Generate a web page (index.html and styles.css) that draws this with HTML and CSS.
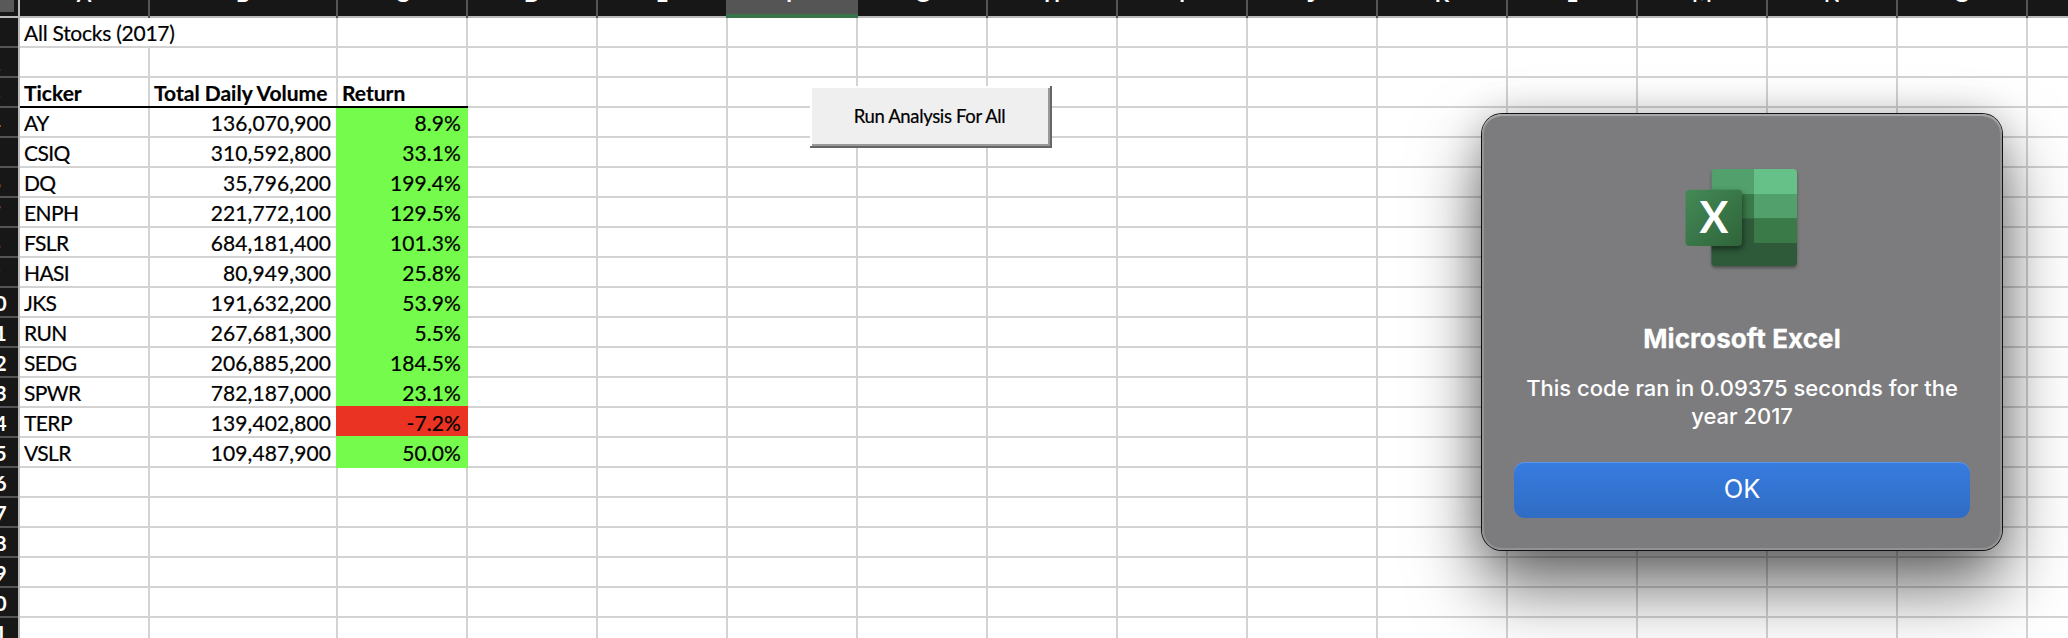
FILE: index.html
```html
<!DOCTYPE html>
<html lang="en">
<head>
<meta charset="utf-8">
<title>All Stocks (2017)</title>
<link rel="stylesheet" href="styles.css">
</head>
<body>
<main class="sheet" id="sheet"></main>

<button class="run-button">Run Analysis For All</button>

<section class="dialog" role="dialog" aria-label="Microsoft Excel">
  <svg class="app-icon" width="124" height="112" viewBox="0 0 124 112" aria-hidden="true">
    <defs>
      <linearGradient id="tile" x1="0" y1="0" x2="1" y2="1">
        <stop offset="0" stop-color="#448a57"/>
        <stop offset="1" stop-color="#2e6439"/>
      </linearGradient>
      <clipPath id="book"><rect x="31.5" y="7" width="85.5" height="97" rx="4"/></clipPath>
      <filter id="soft" x="-20%" y="-20%" width="140%" height="140%"><feGaussianBlur stdDeviation="1.5"/></filter>
      <filter id="softer" x="-20%" y="-20%" width="150%" height="150%"><feGaussianBlur stdDeviation="3"/></filter>
    </defs>
    <rect x="31.5" y="9" width="85.5" height="97" rx="4" fill="#000" opacity=".35" filter="url(#soft)"/>
    <g clip-path="url(#book)">
      <rect x="31" y="7" width="43" height="25" fill="#52a06c"/>
      <rect x="74" y="7" width="43" height="25" fill="#66c189"/>
      <rect x="31" y="32" width="43" height="25" fill="#3a7a48"/>
      <rect x="74" y="32" width="43" height="25" fill="#52a06c"/>
      <rect x="31" y="56.500" width="86" height="48" fill="#2e5a3a"/>
      <rect x="74" y="56.500" width="43" height="24.500" fill="#3a7a48"/>
      <rect x="9" y="31" width="54" height="56" rx="4" fill="#000" opacity=".5" filter="url(#softer)"/>
    </g>
    <rect x="5.500" y="27.700" width="56.500" height="56.300" rx="4" fill="url(#tile)"/>
    <text class="icon-letter" x="33.800" y="71" text-anchor="middle">X</text>
  </svg>
  <h1 class="dialog-title">Microsoft Excel</h1>
  <p class="dialog-text">This code ran in 0.09375 seconds for the<br>year 2017</p>
  <button class="ok-button">OK</button>
</section>
<script src="sheet.js"></script>
</body>
</html>
```
FILE: styles.css
```css
* { box-sizing: border-box; }

body {
  margin: 0;
  width: 2068px;
  height: 638px;
  overflow: hidden;
  position: relative;
  background: #fff;
  color: #000;
}

button { font: inherit; border: 0; padding: 0; }

.sheet {
  margin: -12px 0 0 -29px;
  width: 2097px;
  font-family: Lato, "Liberation Sans", sans-serif;
  font-size: 21px;
}

.row {
  display: grid;
  grid-template-columns: 49px 130px 188px repeat(13, 130px) 40px;
  height: 30px;
}

.cell {
  height: 30px;
  line-height: 30px;
  padding: 0 4px;
  border-right: 2px solid #d3d3d3;
  border-bottom: 2px solid #d3d3d3;
  white-space: nowrap;
  letter-spacing: -.6px;
  -webkit-text-stroke: .2px #000;
}

.col-head {
  height: 30px;
  background: #171717;
  color: #fff;
  font-weight: 700;
  line-height: 12px;
  text-align: center;
  border-right: 2px solid #555;
  box-shadow: inset 0 -2px #bababa;
}
.col-head.selected {
  background: #555;
  box-shadow: inset 0 -4px #3a7549;
  margin-left: -2px;
  border-right: 0;
}

.corner {
  background: #171717;
  border-right: 2px solid #bababa;
  box-shadow: inset 0 -2px #bababa;
  padding: 0 4px 6px 0;
}
.corner-fill { display: block; height: 24px; background: #595959; }

.row-head {
  height: 30px;
  background: #171717;
  color: #fff;
  font-weight: 700;
  line-height: 30px;
  text-align: center;
  border-right: 2px solid #bababa;
  box-shadow: inset 0 -2px #555;
}

.cell:last-child, .col-head:last-child { border-right: 0; }

.spill { border-right: 0; overflow: visible; letter-spacing: -.25px; }
.title {
  height: 28px;
  border-bottom: 0;
  box-shadow: 0 2px #000;
  font-weight: 700;
  letter-spacing: 0;
}
.number { text-align: right; letter-spacing: .1px; padding-right: 5px; }
.up, .down { margin: -2px 0 0 -2px; height: 32px; padding-top: 2px; }
.up { background: #75fb4c; border-color: #75fb4c; }
.down { background: #ea3323; border-color: #ea3323; }
.title-below { margin-top: 0; height: 30px; padding-top: 0; }

.run-button {
  position: absolute;
  left: 810px;
  top: 86px;
  width: 242px;
  height: 62px;
  background: #efefef;
  box-shadow: inset -2px -2px #666, inset 2px 2px #fff, inset -4px -4px #999;
  font: 18.500px/58px Lato, "Liberation Sans", sans-serif;
  letter-spacing: -.35px;
  -webkit-text-stroke: .2px #000;
  color: #000;
  text-align: center;
  padding: 1px 3px 3px 0;
}

.dialog {
  position: absolute;
  left: 1482px;
  top: 114px;
  width: 520px;
  height: 436px;
  border-radius: 20px;
  background: #7c7c7e;
  box-shadow: inset 0 2px 1px #a8a8a8, inset 0 0 0 2px #929294, 0 0 0 1px #111, 0 36px 70px rgba(0, 0, 0, .6), 0 0 36px rgba(0, 0, 0, .18);
  display: flex;
  flex-direction: column;
  align-items: center;
  padding: 48px 32px 32px;
  font-family: Inter, "Liberation Sans", sans-serif;
  color: #fff;
  text-align: center;
}

.app-icon { display: block; flex: none; }
.icon-letter { font: 700 43px Lato, sans-serif; fill: #fff; }

.dialog-title {
  margin: 49px 0 0;
  font-size: 26px;
  line-height: 32px;
  font-weight: 700;
  letter-spacing: .1px;
  white-space: nowrap;
  -webkit-text-stroke: .3px #fff;
}

.dialog-text {
  margin: 19px 0 0;
  font-size: 22px;
  line-height: 28px;
  font-weight: 500;
  white-space: nowrap;
}

.ok-button {
  width: 456px;
  height: 56px;
  flex: none;
  margin-top: auto;
  border-radius: 11px;
  background: linear-gradient(#377ce0, #306cc4);
  box-shadow: inset 0 1px #5b96e8;
  color: #fff;
  font-size: 25.500px;
  line-height: 52px;
  padding-bottom: 3px;
}
```
FILE: sheet.js
```js
const columns = "ABCDEFGHIJKLMNO".split("").concat("");
const cells = {
  1: ["All Stocks (2017)"],
  3: ["Ticker", "Total Daily Volume", "Return"],
  4: ["AY", "136,070,900", "8.9%"],
  5: ["CSIQ", "310,592,800", "33.1%"],
  6: ["DQ", "35,796,200", "199.4%"],
  7: ["ENPH", "221,772,100", "129.5%"],
  8: ["FSLR", "684,181,400", "101.3%"],
  9: ["HASI", "80,949,300", "25.8%"],
  10: ["JKS", "191,632,200", "53.9%"],
  11: ["RUN", "267,681,300", "5.5%"],
  12: ["SEDG", "206,885,200", "184.5%"],
  13: ["SPWR", "782,187,000", "23.1%"],
  14: ["TERP", "139,402,800", "-7.2%"],
  15: ["VSLR", "109,487,900", "50.0%"]
};

function cellClass(row, col, text) {
  let name = "cell";
  if (row === 1 && col === 0) name += " spill";
  if (row === 3 && col < 3) name += " title";
  if (row > 3 && text && col > 0) name += " number";
  if (row > 3 && text && col === 2) name += text.startsWith("-") ? " down" : " up";
  if (row === 4 && col === 2) name += " title-below";
  return name;
}

let html = '<div class="row"><div class="corner"><span class="corner-fill"></span></div>';
for (const letter of columns) {
  html += `<div class="col-head${letter === "F" ? " selected" : ""}">${letter}</div>`;
}
html += "</div>";
for (let row = 1; row <= 21; row++) {
  html += `<div class="row"><div class="row-head">${row}</div>`;
  columns.forEach((letter, col) => {
    const text = (cells[row] || [])[col] || "";
    html += `<div class="${cellClass(row, col, text)}">${text}</div>`;
  });
  html += "</div>";
}
document.getElementById("sheet").innerHTML = html;
```
